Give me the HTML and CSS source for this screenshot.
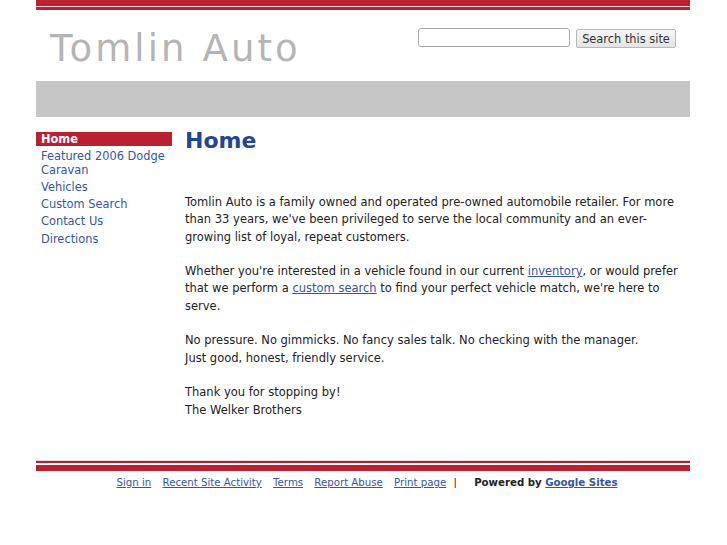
FILE: index.html
```html
<!DOCTYPE html>
<html lang="en">
<head>
	<meta charset="UTF-8">
	<title>Tomlin Auto - Home</title>
	<link rel="stylesheet" href="styles.css">
</head>
<body>
<div class="page">
	<div class="top-rule"></div>

	<div class="header">
		<div class="site-title">Tomlin Auto</div>
		<form class="search">
			<input class="search-box" type="text">
			<button class="search-button" type="button">Search this site</button>
		</form>
	</div>

	<div class="band"></div>

	<div class="main">
		<ul class="nav">
			<li class="current"><a href="#">Home</a></li>
			<li><a href="#">Featured 2006 Dodge Caravan</a></li>
			<li><a href="#">Vehicles</a></li>
			<li><a href="#">Custom Search</a></li>
			<li><a href="#">Contact Us</a></li>
			<li><a href="#">Directions</a></li>
		</ul>

		<div class="content">
			<h1 class="page-title">Home</h1>
			<p>Tomlin Auto is a family owned and operated pre-owned automobile retailer. For more than 33 years, we've been privileged to serve the local community and an ever-growing list of loyal, repeat customers.</p>
			<p>Whether you're interested in a vehicle found in our current <a href="#">inventory</a>, or would prefer that we perform a <a href="#">custom search</a> to find your perfect vehicle match, we're here to serve.</p>
			<p>No pressure. No gimmicks. No fancy sales talk. No checking with the manager.<br>Just good, honest, friendly service.</p>
			<p>Thank you for stopping by!<br>The Welker Brothers</p>
		</div>
	</div>

	<div class="bottom-rule"></div>

	<div class="footer">
		<a href="#">Sign in</a>
		<a href="#">Recent Site Activity</a>
		<a href="#">Terms</a>
		<a href="#">Report Abuse</a>
		<a href="#">Print page</a>
		<span class="sep">|</span>
		<span class="powered">Powered by <a href="#">Google Sites</a></span>
	</div>
</div>
</body>
</html>
```

FILE: styles.css
```css
body {
	margin: 0;
	background: #fff;
	font-family: "DejaVu Sans", Verdana, sans-serif;
	font-size: 11.5px;
	color: #222;
}

a {
	color: #2f4f9f;
}

.page {
	width: 654px;
	margin: 0 37px 0 36px;
}

/* thick red bar with a thin line under it */
.top-rule {
	height: 7px;
	border-bottom: 3px solid #bb2030;
	background: linear-gradient(#bb2030 0, #bb2030 6px, #f4d0d3 6px, #f4d0d3 7px);
}

.header {
	display: flex;
	justify-content: space-between;
	height: 71px;
}

.site-title {
	font-size: 37px;
	letter-spacing: 3.1px;
	color: #b5b5b5;
	padding: 17px 0 0 14px;
}

.search {
	display: flex;
	align-items: flex-start;
	gap: 6px;
	padding: 18px 14px 0 0;
}

.search-box {
	width: 146px;
	height: 15px;
	border: 1px solid #a9a9a9;
	border-radius: 3px;
	padding: 1px 2px;
	margin: 0;
}

.search-button {
	font-family: "DejaVu Sans", Verdana, sans-serif;
	font-size: 11.4px;
	color: #333;
	background: linear-gradient(#f6f6f6, #e4e4e4);
	border: 1px solid #b8b8b8;
	border-radius: 2px;
	height: 19px;
	width: 100px;
	padding: 0;
	margin-top: 1px;
}

.band {
	height: 36px;
	background: #c6c6c6;
}

.main {
	display: flex;
	padding-top: 15px;
	min-height: 328px;
}

.nav {
	list-style: none;
	margin: 0;
	padding: 0;
	width: 136px;
	flex-shrink: 0;
	font-size: 11.4px;
}

.nav li {
	line-height: 13.5px;
	padding: 0 0 3.8px 0;
}

.nav a {
	display: block;
	color: #3556a4;
	text-decoration: none;
	padding-left: 5px;
}

.nav .current {
	padding-bottom: 4px;
}

.nav .current a {
	background: #bb2030;
	color: #fff;
	font-weight: bold;
	line-height: 14px;
}

.content {
	margin-left: 13px;
	width: 495px;
}

.page-title {
	font-size: 22px;
	color: #1f4596;
	margin: -5px 0 39px 0;
	line-height: 28px;
}

.content p {
	margin: 0 0 17.3px 0;
	line-height: 17.3px;
}

.content a {
	color: #3556a4;
}

.bottom-rule {
	height: 2px;
	background: #bb2030;
	border-top: 1px solid #ddd;
	border-bottom: 2px solid #fff;
}

.footer {
	border-top: 6px solid #bb2030;
	text-align: center;
	font-size: 10.2px;
	padding: 6px 0 0 4px;
}

.footer a {
	color: #3556a4;
	margin: 0 4px;
}

.sep {
	margin-right: 14px;
}

.powered {
	font-weight: bold;
	color: #222;
}

.powered a {
	margin: 0;
}
```
